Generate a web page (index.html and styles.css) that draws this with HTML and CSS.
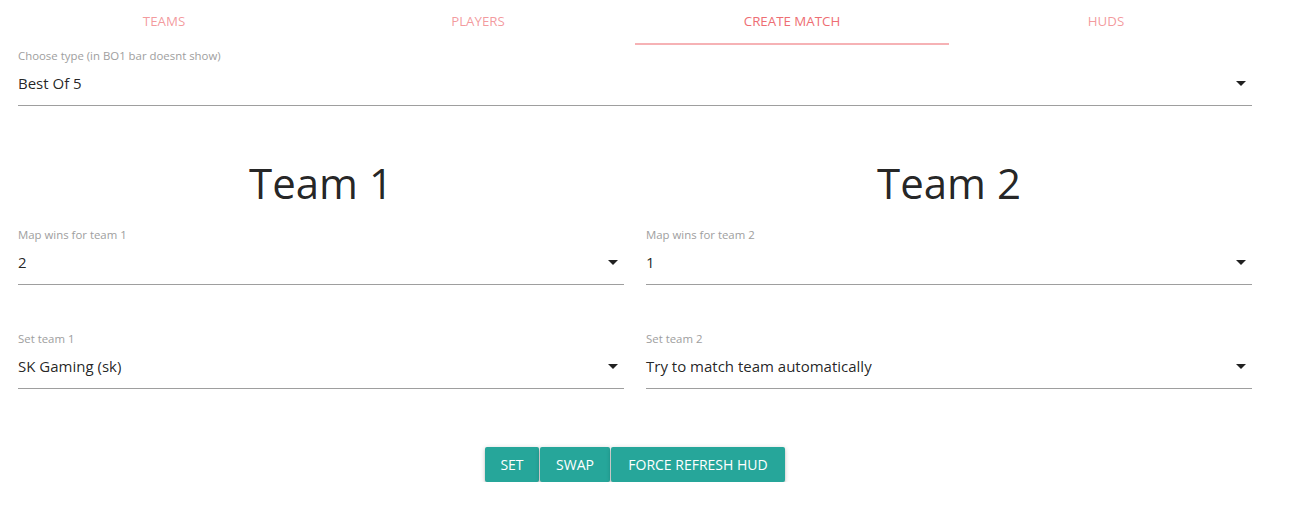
FILE: index.html
```html
<!DOCTYPE html>
<html lang="en">
<head>
    <meta charset="UTF-8">
    <title>Create Match</title>
    <link rel="stylesheet" href="styles.css">
</head>
<body>
    <div class="page">
        <ul class="tabs">
            <li class="tab">Teams</li>
            <li class="tab">Players</li>
            <li class="tab active">Create Match</li>
            <li class="tab">HUDs</li>
        </ul>

        <div class="field first">
            <label>Choose type (in BO1 bar doesnt show)</label>
            <div class="select">
                <span>Best Of 5</span>
                <svg class="caret" width="24" height="24" viewBox="0 0 24 24"><path d="M7 10l5 5 5-5z"/></svg>
            </div>
        </div>

        <div class="row">
            <div class="col">
                <h2 class="team">Team 1</h2>
                <div class="field">
                    <label>Map wins for team 1</label>
                    <div class="select">
                        <span>2</span>
                        <svg class="caret" width="24" height="24" viewBox="0 0 24 24"><path d="M7 10l5 5 5-5z"/></svg>
                    </div>
                </div>
                <div class="field lower">
                    <label>Set team 1</label>
                    <div class="select">
                        <span>SK Gaming (sk)</span>
                        <svg class="caret" width="24" height="24" viewBox="0 0 24 24"><path d="M7 10l5 5 5-5z"/></svg>
                    </div>
                </div>
            </div>
            <div class="col">
                <h2 class="team">Team 2</h2>
                <div class="field">
                    <label>Map wins for team 2</label>
                    <div class="select">
                        <span>1</span>
                        <svg class="caret" width="24" height="24" viewBox="0 0 24 24"><path d="M7 10l5 5 5-5z"/></svg>
                    </div>
                </div>
                <div class="field lower">
                    <label>Set team 2</label>
                    <div class="select">
                        <span>Try to match team automatically</span>
                        <svg class="caret" width="24" height="24" viewBox="0 0 24 24"><path d="M7 10l5 5 5-5z"/></svg>
                    </div>
                </div>
            </div>
        </div>

        <div class="actions">
            <button class="btn btn-set">Set</button>
            <button class="btn btn-swap">Swap</button>
            <button class="btn btn-refresh">Force refresh HUD</button>
        </div>
    </div>
</body>
</html>
```

FILE: styles.css
```css
body {
    margin: 0;
    font-family: "Open Sans", "Noto Sans", sans-serif;
    color: rgba(0, 0, 0, 0.87);
    background: #fff;
}
.page {
    width: 1256px;
    margin-left: 7px;
}
.tabs {
    display: flex;
    margin: 0;
    padding: 0;
    list-style: none;
    height: 45px;
}
.tab {
    flex: 1;
    text-align: center;
    line-height: 42px;
    font-size: 13.3px;
    text-transform: uppercase;
    color: rgba(238, 110, 115, 0.7);
    border-bottom: 2px solid transparent;
    box-sizing: border-box;
    height: 45px;
}
.tab.active {
    color: #ee6e73;
    border-bottom-color: #f6b2b5;
}
.field {
    padding: 0 11px;
}
.field.first {
    margin-top: 4px;
}
.field.lower {
    margin-top: 47px;
}
.field label {
    display: block;
    font-size: 11.4px;
    line-height: 14px;
    color: #9e9e9e;
}
.select {
    display: flex;
    align-items: center;
    justify-content: space-between;
    height: 40px;
    padding-bottom: 2px;
    border-bottom: 1px solid #9e9e9e;
    font-size: 15px;
}
.caret {
    fill: rgba(0, 0, 0, 0.87);
    margin-right: -1px;
}
.row {
    display: flex;
}
.col {
    flex: 1;
}
.team {
    margin: 0;
    padding: 47px 0 15px;
    line-height: 60px;
    font-size: 42px;
    font-weight: 400;
    text-align: center;
}
.actions {
    display: flex;
    justify-content: center;
    gap: 1px;
    margin-top: 58px;
}
.btn {
    height: 35px;
    padding: 0;
    border: none;
    border-radius: 2px;
    background-color: #26a69a;
    color: #fff;
    font-family: inherit;
    font-size: 14px;
    text-transform: uppercase;
    box-shadow: 0 2px 2px 0 rgba(0, 0, 0, 0.14), 0 3px 1px -2px rgba(0, 0, 0, 0.12), 0 1px 5px 0 rgba(0, 0, 0, 0.2);
    cursor: pointer;
}
.btn-set {
    width: 54px;
}
.btn-swap {
    width: 70px;
}
.btn-refresh {
    width: 174px;
}
```
